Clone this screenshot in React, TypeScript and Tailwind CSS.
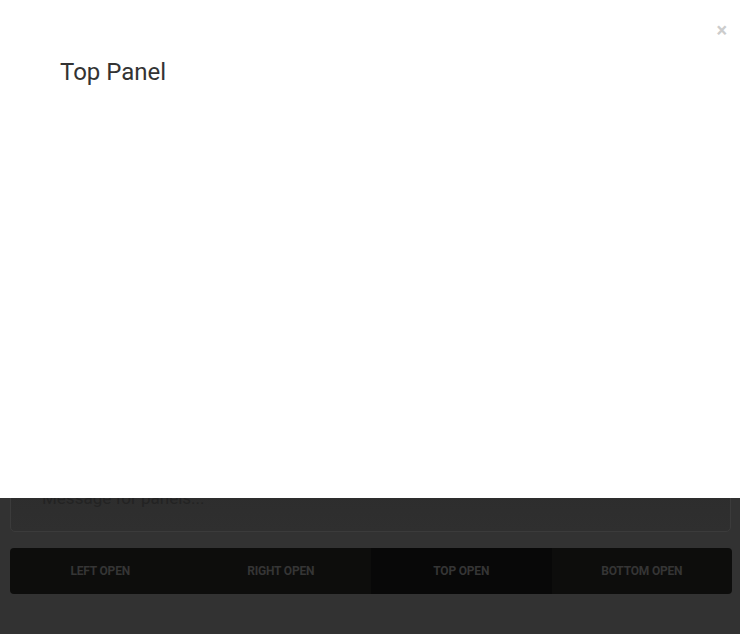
import React from "react";

export default function App() {
  const buttons = ["Left Open", "Right Open", "Top Open", "Bottom Open"];
  return (
    <div className="relative h-[634px] w-[740px] overflow-hidden bg-[#323232] font-['Roboto',sans-serif]">
      <div className="flex h-full flex-col justify-end pl-[10px] pr-[8px] pb-[40px]">
        <div className="h-[60px] rounded-[5px] border border-[#3b3b3b] bg-gradient-to-b from-[#2c2c2c] to-[#2f2f2f] mr-[1px] pl-[31px] pt-[12px] text-[17px] leading-[26px] text-[#232323]">
          Message for panels...
        </div>
        <div className="mt-[16px] flex h-[46px] overflow-hidden rounded-[4px] bg-[#0d0d0c]">
          {buttons.map((b) => (
            <div
              key={b}
              className={
                b === "Top Open"
                  ? "flex flex-1 items-center justify-center bg-[#080808] text-[12px] font-bold uppercase tracking-[-0.2px] text-[#353535]"
                  : "flex flex-1 items-center justify-center text-[12px] font-bold uppercase tracking-[-0.2px] text-[#353535]"
              }
            >
              {b}
            </div>
          ))}
        </div>
      </div>
      <div className="absolute inset-x-0 top-0 h-[498px] bg-white">
        <div className="absolute right-[13px] top-[18px] text-[20px] font-bold leading-[24px] text-[#cccccc]">×</div>
        <h2 className="pl-[60px] pt-[58px] text-[24px] font-normal leading-[28px] text-[#333333]">Top Panel</h2>
      </div>
    </div>
  );
}
